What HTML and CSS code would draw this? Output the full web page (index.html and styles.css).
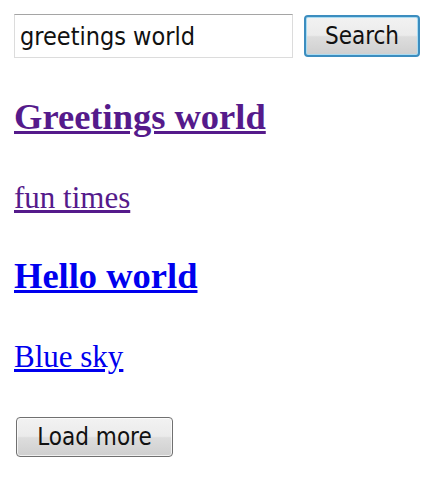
FILE: index.html
```html
<!DOCTYPE html>
<html lang="en">
<head>
    <meta charset="UTF-8">
    <meta name="viewport" content="width=device-width, initial-scale=1.0">
    <title>Search</title>
    <link rel="stylesheet" href="styles.css">
</head>
<body>
    <form class="search-form">
        <input type="text" class="search-box" value="greetings world">
        <button type="submit" class="btn btn-search">Search</button>
    </form>

    <div class="results">
        <a href="#" class="result-title visited">Greetings world</a>
        <a href="#" class="result-text visited">fun times</a>
        <a href="#" class="result-title">Hello world</a>
        <a href="#" class="result-text">Blue sky</a>
    </div>

    <button type="button" class="btn btn-more">Load more</button>
</body>
</html>
```

FILE: styles.css
```css
body {
    margin: 0;
    padding: 14px;
    background: #fff;
    font-family: "Liberation Serif", "Times New Roman", serif;
}

.search-form {
    display: flex;
    align-items: center;
    gap: 11px;
    margin: 0;
}

.search-box {
    box-sizing: border-box;
    width: 279px;
    height: 44px;
    margin: 0;
    padding: 0 5px;
    border: 1px solid #dcdcdc;
    border-top-color: #a5a5a5;
    border-radius: 0;
    outline: none;
    font-family: "DejaVu Sans Condensed", "DejaVu Sans", sans-serif;
    font-stretch: condensed;
    font-size: 25px;
    color: #111;
}

.btn {
    box-sizing: border-box;
    margin: 0;
    padding: 0;
    border: 1px solid #707070;
    border-radius: 4px;
    background: linear-gradient(to bottom, #f2f2f2 0%, #ebebeb 48%, #dddddd 52%, #cfcfcf 100%);
    box-shadow: inset 0 0 0 1px rgba(255, 255, 255, 0.7);
    font-family: "DejaVu Sans Condensed", "DejaVu Sans", sans-serif;
    font-stretch: condensed;
    font-size: 24px;
    color: #111;
    cursor: pointer;
}

.btn-search {
    width: 116px;
    height: 42px;
    border: 2px solid #3c8dbf;
    box-shadow: inset 0 0 0 1px #a9dcf3;
}

.results {
    display: flex;
    flex-direction: column;
    align-items: flex-start;
}

.result-title {
    font-size: 36.5px;
    font-weight: bold;
    line-height: 36px;
    color: #0000ee;
    margin-top: 41px;
}

.result-text {
    font-size: 31px;
    line-height: 31px;
    color: #0000ee;
}

.results .result-title + .result-text {
    margin-top: 47px;
}

.results .result-text + .result-title {
    margin-top: 45px;
}

.visited {
    color: #551a8b;
}

.btn-more {
    display: block;
    width: 157px;
    height: 40px;
    margin: 45px 0 0 2px;
}
```
